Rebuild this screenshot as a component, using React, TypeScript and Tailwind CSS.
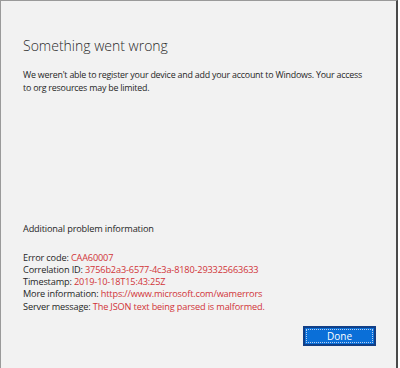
export default function App() {
  const details = [
    { label: 'Error code:', value: 'CAA60007' },
    { label: 'Correlation ID:', value: '3756b2a3-6577-4c3a-8180-293325663633' },
    { label: 'Timestamp:', value: '2019-10-18T15:43:25Z' },
    { label: 'More information:', value: 'https://www.microsoft.com/wamerrors' },
    { label: 'Server message:', value: 'The JSON text being parsed is malformed.' },
  ]

  return (
    <div className="w-[400px] h-[368px] bg-white flex" style={{ fontFamily: '"Open Sans", "Noto Sans", sans-serif' }}>
      <div className="w-[398px] h-[368px] bg-[#f2f2f2] border-l border-t border-[#9a9a9a] border-r-2 border-r-[#4a4a4a] flex flex-col pl-[22px] pr-[24px]">
        <h1 className="mt-[36px] text-[14px] font-light leading-[18px] text-[#2b2b2b]">Something went wrong</h1>
        <p className="mt-[13px] text-[8.9px] tracking-[-0.22px] leading-[13px] text-[#262626]">
          We weren't able to register your device and add your account to Windows. Your access to org resources may be limited.
        </p>

        <div className="mt-auto">
          <p className="text-[9.2px] tracking-[-0.16px] leading-[13px] text-[#262626]">Additional problem information</p>
          <div className="mt-[17px] flex flex-col text-[9.2px] tracking-[-0.16px] leading-[12.3px]">
            {details.map((d) => (
              <p key={d.label} className="text-[#262626]">
                {d.label} <span className="text-[#d13438]">{d.value}</span>
              </p>
            ))}
          </div>
        </div>

        <div className="flex justify-end mt-[13px] mb-[22px] mr-[-4px]">
          <button className="w-[73px] h-[20px] bg-[#0a6fd8] border-2 border-[#123f86] p-[1px]">
            <span className="flex h-full w-full items-center justify-center border border-dotted border-[#b9cff0] text-[10px] font-medium text-white leading-none">
              Done
            </span>
          </button>
        </div>
      </div>
    </div>
  )
}
